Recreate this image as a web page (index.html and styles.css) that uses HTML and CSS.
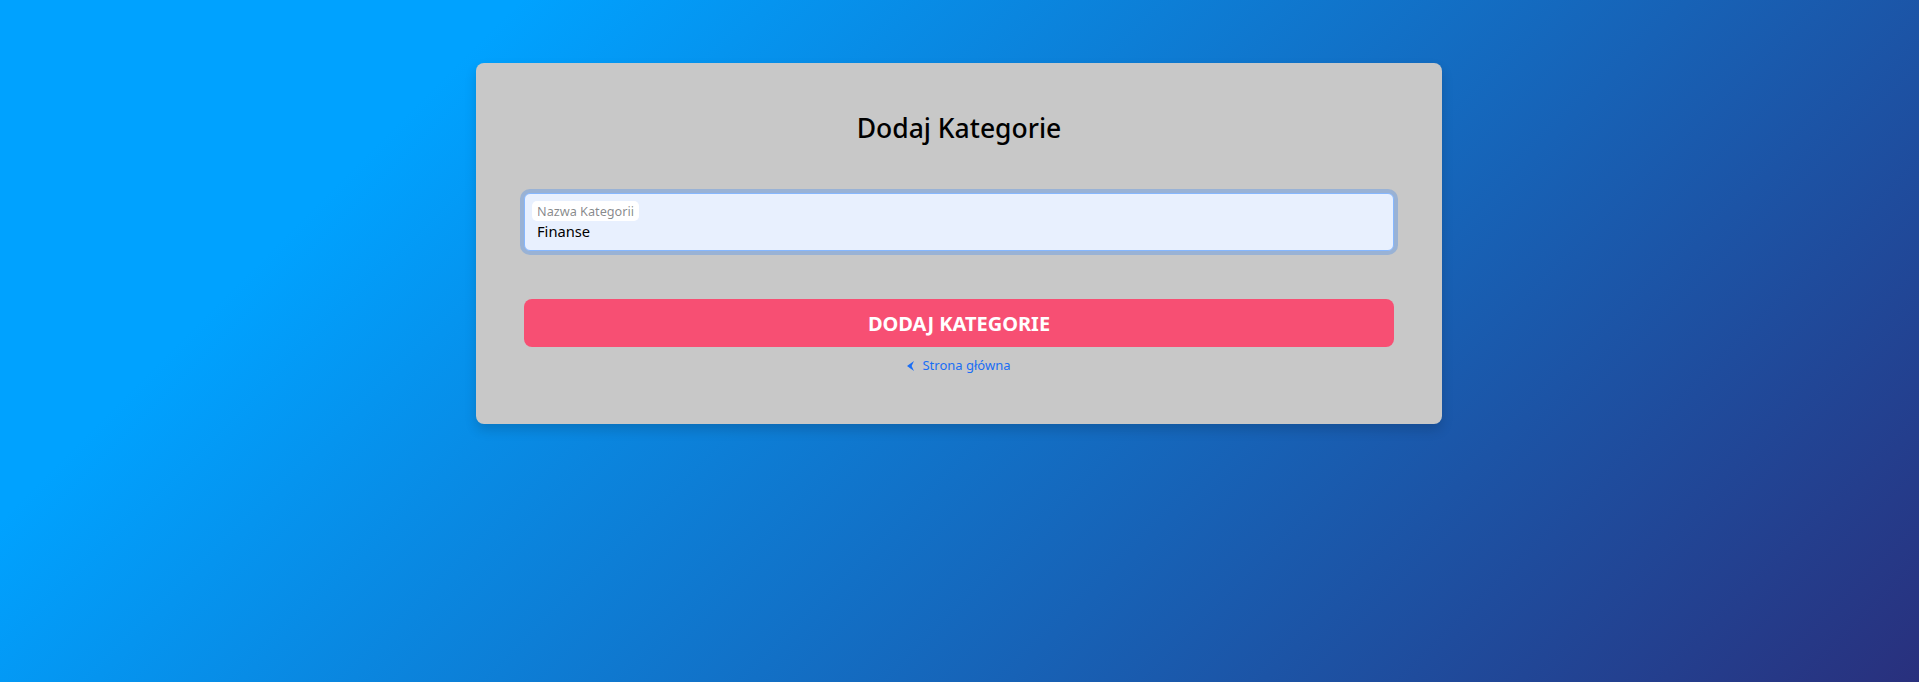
FILE: index.html
```html
<!DOCTYPE html>
<html lang="pl">
<head>
<meta charset="utf-8">
<title>Dodaj Kategorie</title>
<link rel="stylesheet" href="styles.css">
</head>
<body>
<main class="page">
  <section class="card">
    <h3 class="title">Dodaj Kategorie</h3>
    <div class="field">
      <span class="field-label">Nazwa Kategorii</span>
      <span class="field-value">Finanse</span>
    </div>
    <button class="btn-add" type="button">DODAJ KATEGORIE</button>
    <a class="back-link" href="#">
      <svg class="back-icon" viewBox="0 0 7 10" width="7" height="10" aria-hidden="true"><path d="M0 5 L7 0 L4.6 5 L7 10 Z" fill="currentColor"/></svg>
      <span>Strona główna</span>
    </a>
  </section>
</main>
</body>
</html>
```
FILE: styles.css
```css
* { box-sizing: border-box; }
html, body { margin: 0; }
body {
  font-family: "Noto Sans", "Open Sans", "DejaVu Sans", sans-serif;
  color: #212529;
  background: linear-gradient(135deg, #00a2ff 20%, #29307d 100%);
  height: 682px;
  overflow: hidden;
}
.page {
  display: flex;
  justify-content: center;
  padding: 63px 1px 0 0;
}
.card {
  width: 966px;
  background: #c8c8c8;
  border-radius: 8px;
  padding: 48px;
  display: flex;
  flex-direction: column;
  align-items: stretch;
  box-shadow: 0 6px 12px rgba(0, 0, 0, 0.15);
}
.title {
  margin: 0 0 48px;
  text-align: center;
  font-size: 26.5px;
  font-weight: 500;
  line-height: 34px;
  color: #000;
}
.field {
  height: 58px;
  background: #e8f0fe;
  border: 1px solid #86b7fe;
  border-radius: 6px;
  box-shadow: 0 0 0 4px rgba(13, 110, 253, 0.25);
  padding: 7px 0 0 7px;
  display: flex;
  flex-direction: column;
  align-items: flex-start;
  margin-bottom: 48px;
}
.field-label {
  background: #fff;
  border-radius: 5px;
  height: 20px;
  padding: 0 5px;
  font-size: 12.7px;
  line-height: 20px;
  color: rgba(33, 37, 41, 0.55);
}
.field-value {
  padding-left: 5px;
  font-size: 14.7px;
  line-height: 20px;
  color: #000;
}
.btn-add {
  height: 48px;
  border: none;
  border-radius: 8px;
  background: #f74f73;
  color: #fff;
  font-family: inherit;
  font-size: 20px;
  font-weight: 700;
  cursor: pointer;
}
.back-link {
  align-self: center;
  margin-top: 8px;
  display: flex;
  align-items: center;
  gap: 8px;
  font-size: 13px;
  line-height: 21px;
  color: #1a6ef5;
  text-decoration: none;
}
.back-icon { display: block; }
```
